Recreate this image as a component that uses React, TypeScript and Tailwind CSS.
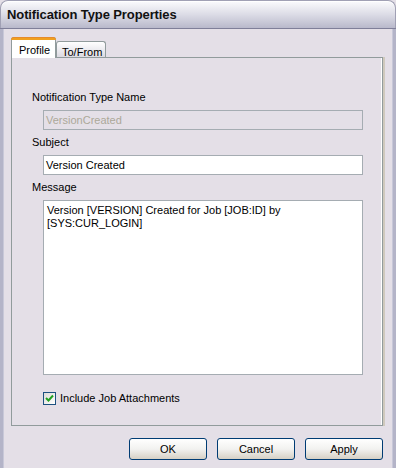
import React from "react";

function Checkbox() {
  return (
    <div className="w-[13px] h-[13px] border border-[#1c5180] bg-gradient-to-br from-[#dcdcd7] to-white flex items-center justify-center">
      <svg width="9" height="9" viewBox="0 0 9 9">
        <path d="M1 4 L3.5 6.5 L8 1.5" stroke="#21a121" strokeWidth="2" fill="none" />
      </svg>
    </div>
  );
}

function XPButton({ label }: { label: string }) {
  return (
    <button className="w-[78px] h-[22px] rounded-[3px] border border-[#003c74] bg-gradient-to-b from-white via-[#f2f2f0] to-[#d6d0c5] text-black text-[11px] leading-none flex items-center justify-center shadow-[inset_0_-1px_0_#d8d2c6]">
      {label}
    </button>
  );
}

export default function App() {
  return (
    <div
      className="w-[396px] h-[468px] overflow-hidden bg-[#e4dfe7] flex flex-col text-black text-[11px]"
      style={{ fontFamily: '"Liberation Sans", Arial, sans-serif' }}
    >
      {/* Title bar */}
      <div className="h-[28px] shrink-0 rounded-t-[8px] border border-b-0 border-[#a0a0b4] bg-gradient-to-b from-[#fbfbfd] via-[#dcdce6] to-[#b9b9cb] flex items-center px-[6px] shadow-[inset_0_1px_0_#ffffff]">
        <span className="font-bold text-[13px] text-[#111] tracking-[-0.1px]">Notification Type Properties</span>
      </div>
      <div className="h-px bg-[#7f7f99] shrink-0" />
      {/* Body */}
      <div className="flex-1 flex flex-col border-l-[3px] border-r-[3px] border-[#b4b4c8] shadow-[inset_1px_0_0_#c8c8d8,inset_-1px_0_0_#c8c8d8] pl-[8px] pr-[10px]">
        {/* Tabs */}
        <div className="flex items-end mt-[8px] h-[21px] relative z-10">
          <div className="w-[45px] h-[21px] bg-white border border-b-0 border-[#919b9c] rounded-t-[3px] relative flex items-start pl-[7px] pt-[4px]">
            <div className="absolute -top-px -left-px -right-px h-[3px] rounded-t-[3px] bg-[#f0a020] border-t border-[#e68b2c]" />
            <span>Profile</span>
          </div>
          <div className="w-[50px] h-[16px] mb-px bg-gradient-to-b from-white to-[#dcdae2] border border-b-0 border-[#919b9c] rounded-t-[3px] flex items-start pl-[5px] pt-[2px]">
            <span>To/From</span>
          </div>
        </div>
        {/* Panel */}
        <div className="h-[369px] -mt-px border border-[#919b9c] bg-[#e4dfe7] shadow-[inset_-1px_0_0_#ffffff,2px_0_0_#cfc9bd] flex flex-col pl-[20px] pr-[19px]">
          <div className="mt-[33px] h-[13px] leading-[13px]">Notification Type Name</div>
          <div className="mt-[6px] ml-[11px] h-[20px] border border-[#a5acb2] bg-[#e4dfe7] text-[#aca899] flex items-center pl-[2px]">
            VersionCreated
          </div>
          <div className="mt-[6px] h-[13px] leading-[13px]">Subject</div>
          <div className="mt-[6px] ml-[11px] h-[20px] border border-[#a5acb2] bg-white flex items-center pl-[2px]">
            Version Created
          </div>
          <div className="mt-[6px] h-[13px] leading-[13px]">Message</div>
          <div className="mt-[6px] ml-[11px] h-[175px] border border-[#a5acb2] bg-white pl-[3px] pt-[3px] leading-[13px]">
            Version [VERSION] Created for Job [JOB:ID] by
            <br />
            [SYS:CUR_LOGIN]
          </div>
          <div className="mt-[17px] ml-[11px] flex items-center gap-[4px] h-[13px]">
            <Checkbox />
            <span>Include Job Attachments</span>
          </div>
        </div>
        {/* Buttons */}
        <div className="mt-[12px] flex justify-end gap-[10px]">
          <XPButton label="OK" />
          <XPButton label="Cancel" />
          <XPButton label="Apply" />
        </div>
      </div>
    </div>
  );
}
